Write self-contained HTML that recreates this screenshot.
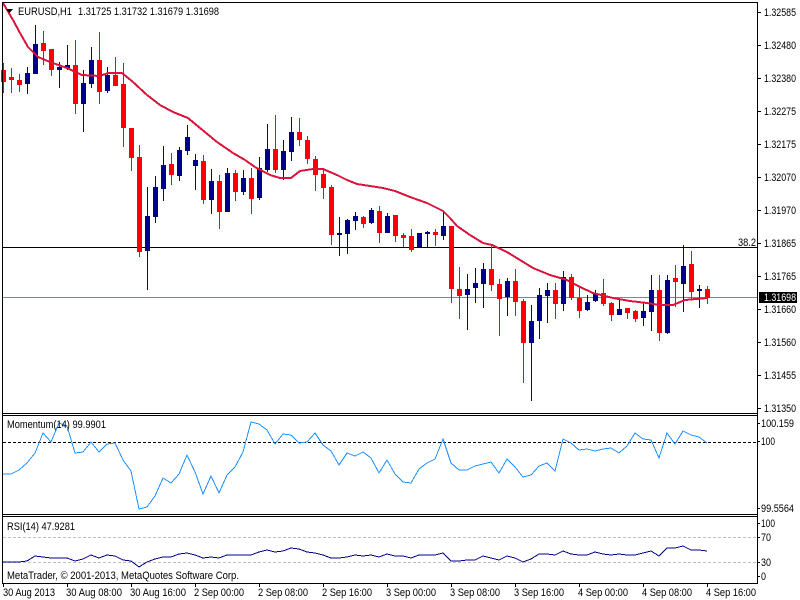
<!DOCTYPE html>
<html>
<head>
<meta charset="utf-8">
<style>
html,body{margin:0;padding:0;background:#fff;width:800px;height:600px;overflow:hidden}
svg{display:block;position:absolute;left:0;top:0}
text{font-family:"Liberation Sans",sans-serif;font-size:11px;fill:#000}
</style>
</head>
<body>
<svg width="800" height="600" viewBox="0 0 800 600" xmlns="http://www.w3.org/2000/svg">
<rect width="800" height="600" fill="#fff"/>
<g shape-rendering="crispEdges" fill="none">
<!-- level lines -->
<path d="M3 247.5H757" stroke="#000"/>
<path d="M3 297.5H757" stroke="#778899"/>
<path d="M3 442.5H757" stroke="#000" stroke-dasharray="3 2"/>
<path d="M3 537.5H757M3 562.5H757" stroke="#c0c0c0" stroke-dasharray="3 2"/>
<!-- wicks -->
<path stroke="#f00" d="M3.5 63V93M11.5 68V93M19.5 74V92M43.5 31V65M51.5 49V76M75.5 40V114M99.5 32V104M115.5 57V86M123.5 63V147M131.5 128V171M139.5 145V257M171.5 153V185M203.5 155V204M219.5 175V229M235.5 170V201M251.5 168V214M275.5 115V173M299.5 118V146M307.5 136V164M315.5 156V191M323.5 170V199M331.5 185V245M363.5 216V228M379.5 206V243M395.5 215V242M403.5 233V247M411.5 229V252M435.5 229V246M451.5 226V303M459.5 267V319M491.5 245V291M499.5 279V336M515.5 269V316M523.5 299V383M555.5 283V319M571.5 274V300M579.5 286V318M603.5 279V306M611.5 302V321M627.5 308V319M635.5 310V322M659.5 275V341M675.5 265V307M691.5 251V299M707.5 286V304"/>
<path stroke="#00008b" d="M27.5 67V94M35.5 25V74M59.5 62V88M67.5 45V70M83.5 70V132M91.5 47V88M107.5 67V93M147.5 187V290M155.5 176V223M163.5 146V201M179.5 147V181M187.5 125V155M195.5 154V190M211.5 169V214M227.5 168V212M243.5 170V195M259.5 157V200M267.5 124V172M283.5 140V180M291.5 117V161M339.5 217V256M347.5 219V254M355.5 212V230M371.5 208V224M387.5 213V233M419.5 233V247M427.5 231V247M443.5 211V240M467.5 274V330M475.5 268V303M483.5 263V308M507.5 278V316M531.5 305V401M539.5 288V339M547.5 283V323M563.5 271V311M587.5 295V311M595.5 290V302M619.5 298V315M643.5 303V326M651.5 275V331M667.5 275V334M683.5 245V312M699.5 285V308"/>
<!-- bodies -->
<path stroke="#f00" stroke-width="5" d="M3.5 70V82M11.5 77V80M19.5 80V85M43.5 43V51M51.5 49V70M75.5 65V104M99.5 60V92M115.5 75V86M123.5 84V128M131.5 128V158M139.5 157V252M171.5 164V175M203.5 161V200M219.5 181V212M235.5 173V192M251.5 178V199M275.5 149V170M299.5 132V140M307.5 140V159M315.5 159V175M323.5 174V188M331.5 187V235M363.5 217V224M379.5 211V233M395.5 215V236M403.5 235V238M411.5 236V250M435.5 232V235M451.5 226V289M459.5 289V296M491.5 269V285M499.5 284V299M515.5 281V302M523.5 301V343M555.5 290V304M571.5 277V298M579.5 298V311M603.5 293V304M611.5 303V315M627.5 308V313M635.5 311V319M659.5 290V333M675.5 278V282M691.5 264V292M707.5 289V298"/>
<path stroke="#00008b" stroke-width="5" d="M27.5 73V84M35.5 44V74M59.5 67V70M67.5 65V68M83.5 83V104M91.5 60V84M107.5 75V91M147.5 216V251M155.5 187V217M163.5 165V189M179.5 150V176M187.5 137V151M195.5 160V166M211.5 181V200M227.5 173V212M243.5 178V192M259.5 168V198M267.5 149V170M283.5 151V170M291.5 132V152M339.5 233V235M347.5 220V234M355.5 216V221M371.5 210V223M387.5 216V233M419.5 233V247M427.5 232V234M443.5 226V236M467.5 289V295M475.5 283V288M483.5 269V284M507.5 281V297M531.5 321V343M539.5 295V321M547.5 290V296M563.5 277V304M587.5 302V310M595.5 293V301M619.5 309V315M643.5 311V318M651.5 290V312M667.5 280V333M683.5 266V284M699.5 289V291"/>
<!-- moving average -->
<path stroke="#dc143c" stroke-width="2" d="M3 3L13 20L20 33L28 47L38 57L50 62L67 68L82 75L100 76L108 73L122 73L133 82L147 95L160 105L173 112L188 118L200 128L217 142L233 153L245 160L255 167L270 175L280 178L291 178L300 171L313 169L323 169L337 175L347 180L357 184L370 186L383 188L395 191L410 197L427 203L443 211L450 218L457 226L470 235L483 243L492 245L507 252L520 260L533 268L550 275L567 280L580 287L593 293L613 298L630 301L647 303L660 305L673 305L685 300L707 298"/>
<!-- momentum -->
<path stroke="#1e90ff" d="M3 474L11 474L19 470L27 463L35 453L43 433L51 442L59 423L67 426L75 453L83 452L91 442L99 452L107 444L115 443L123 460L131 471L139 509L147 507L155 496L163 478L171 483L179 474L187 455L195 472L203 494L211 476L219 493L227 475L235 467L243 452L251 422L259 424L267 430L275 444L283 434L291 435L299 443L307 442L315 433L323 445L331 451L339 465L347 453L355 456L363 452L371 458L379 473L387 460L395 474L403 482L411 483L419 469L427 463L435 459L443 439L451 463L459 470L467 470L475 466L483 464L491 462L499 473L507 459L515 467L523 477L531 475L539 466L547 463L555 471L563 439L571 443L579 450L587 449L595 451L603 449L611 448L619 453L627 446L635 433L643 439L651 440L659 458L667 433L675 444L683 431L691 435L699 437L707 443"/>
<!-- rsi -->
<path stroke="#00008b" d="M3 562L11 562L19 562L27 561L35 556L43 557L51 558L59 558L67 558L75 561L83 559L91 555L99 558L107 555L115 556L123 560L131 561L139 567L147 562L155 559L163 557L171 557L179 554L187 553L195 555L203 558L211 557L219 558L227 555L235 555L243 555L251 555L259 552L267 550L275 552L283 551L291 548L299 549L307 552L315 553L323 555L331 558L339 558L347 557L355 555L363 556L371 555L379 557L387 554L395 556L403 556L411 558L419 555L427 555L435 555L443 553L451 561L459 561L467 560L475 560L483 556L491 558L499 560L507 556L515 558L523 562L531 559L539 554L547 554L555 555L563 551L571 554L579 555L587 555L595 552L603 554L611 555L619 554L627 555L635 555L643 553L651 551L659 556L667 548L675 548L683 546L691 550L699 550L707 551"/>
<!-- frame -->
<path stroke="#000" d="M2.5 2V584M757.5 2V584M2 2.5H758M2 413.5H758M2 415.5H758M2 514.5H758M2 516.5H758M2 583.5H758"/>
<!-- axis ticks right -->
<path stroke="#000" d="M758 12.5h3M758 45.5h3M758 78.5h3M758 111.5h3M758 144.5h3M758 177.5h3M758 210.5h3M758 243.5h3M758 276.5h3M758 309.5h3M758 342.5h3M758 375.5h3M758 408.5h3M758 423.5h2M758 441.5h2M758 508.5h2M758 523.5h2M758 537.5h2M758 562.5h2M758 576.5h2"/>
<!-- time ticks -->
<path stroke="#000" d="M3.5 584v3M67.5 584v3M131.5 584v3M195.5 584v3M259.5 584v3M323.5 584v3M387.5 584v3M451.5 584v3M515.5 584v3M579.5 584v3M643.5 584v3M707.5 584v3"/>
<rect x="759" y="292" width="38" height="11" fill="#000"/>
</g>
<path d="M6 9H13L9.5 13Z" fill="#000"/>
<g lengthAdjust="spacingAndGlyphs">
<text x="18" y="15" textLength="54" lengthAdjust="spacingAndGlyphs">EURUSD,H1</text>
<text x="78" y="15" textLength="141" lengthAdjust="spacingAndGlyphs">1.31725 1.31732 1.31679 1.31698</text>
<text x="738" y="246" textLength="18" lengthAdjust="spacingAndGlyphs">38.2</text>
<text x="7" y="428" textLength="99" lengthAdjust="spacingAndGlyphs">Momentum(14) 99.9901</text>
<text x="7" y="530" textLength="68" lengthAdjust="spacingAndGlyphs">RSI(14) 47.9281</text>
<text x="7" y="579" textLength="232" lengthAdjust="spacingAndGlyphs">MetaTrader, © 2001-2013, MetaQuotes Software Corp.</text>
</g>
<g>
<text x="764" y="16" textLength="32" lengthAdjust="spacingAndGlyphs">1.32585</text>
<text x="764" y="49" textLength="32" lengthAdjust="spacingAndGlyphs">1.32480</text>
<text x="764" y="82" textLength="32" lengthAdjust="spacingAndGlyphs">1.32380</text>
<text x="764" y="115" textLength="32" lengthAdjust="spacingAndGlyphs">1.32275</text>
<text x="764" y="148" textLength="32" lengthAdjust="spacingAndGlyphs">1.32175</text>
<text x="764" y="181" textLength="32" lengthAdjust="spacingAndGlyphs">1.32070</text>
<text x="764" y="214" textLength="32" lengthAdjust="spacingAndGlyphs">1.31970</text>
<text x="764" y="247" textLength="32" lengthAdjust="spacingAndGlyphs">1.31865</text>
<text x="764" y="280" textLength="32" lengthAdjust="spacingAndGlyphs">1.31765</text>
<text x="764" y="313" textLength="32" lengthAdjust="spacingAndGlyphs">1.31660</text>
<text x="764" y="346" textLength="32" lengthAdjust="spacingAndGlyphs">1.31560</text>
<text x="764" y="379" textLength="32" lengthAdjust="spacingAndGlyphs">1.31455</text>
<text x="764" y="412" textLength="32" lengthAdjust="spacingAndGlyphs">1.31350</text>
<text x="764" y="301" textLength="32" lengthAdjust="spacingAndGlyphs" style="fill:#fff">1.31698</text>
<text x="761" y="427" textLength="33" lengthAdjust="spacingAndGlyphs">100.159</text>
<text x="761" y="445" textLength="14" lengthAdjust="spacingAndGlyphs">100</text>
<text x="761" y="512" textLength="33" lengthAdjust="spacingAndGlyphs">99.5564</text>
<text x="761" y="527" textLength="14" lengthAdjust="spacingAndGlyphs">100</text>
<text x="761" y="541" textLength="10" lengthAdjust="spacingAndGlyphs">70</text>
<text x="761" y="566" textLength="10" lengthAdjust="spacingAndGlyphs">30</text>
<text x="761" y="580" textLength="5" lengthAdjust="spacingAndGlyphs">0</text>
</g>
<g>
<text x="3" y="596" textLength="52" lengthAdjust="spacingAndGlyphs">30 Aug 2013</text>
<text x="66" y="596" textLength="56" lengthAdjust="spacingAndGlyphs">30 Aug 08:00</text>
<text x="130" y="596" textLength="56" lengthAdjust="spacingAndGlyphs">30 Aug 16:00</text>
<text x="194" y="596" textLength="50" lengthAdjust="spacingAndGlyphs">2 Sep 00:00</text>
<text x="258" y="596" textLength="50" lengthAdjust="spacingAndGlyphs">2 Sep 08:00</text>
<text x="322" y="596" textLength="50" lengthAdjust="spacingAndGlyphs">2 Sep 16:00</text>
<text x="386" y="596" textLength="50" lengthAdjust="spacingAndGlyphs">3 Sep 00:00</text>
<text x="450" y="596" textLength="50" lengthAdjust="spacingAndGlyphs">3 Sep 08:00</text>
<text x="514" y="596" textLength="50" lengthAdjust="spacingAndGlyphs">3 Sep 16:00</text>
<text x="578" y="596" textLength="50" lengthAdjust="spacingAndGlyphs">4 Sep 00:00</text>
<text x="642" y="596" textLength="50" lengthAdjust="spacingAndGlyphs">4 Sep 08:00</text>
<text x="706" y="596" textLength="50" lengthAdjust="spacingAndGlyphs">4 Sep 16:00</text>
</g>
</svg>
</body>
</html>
